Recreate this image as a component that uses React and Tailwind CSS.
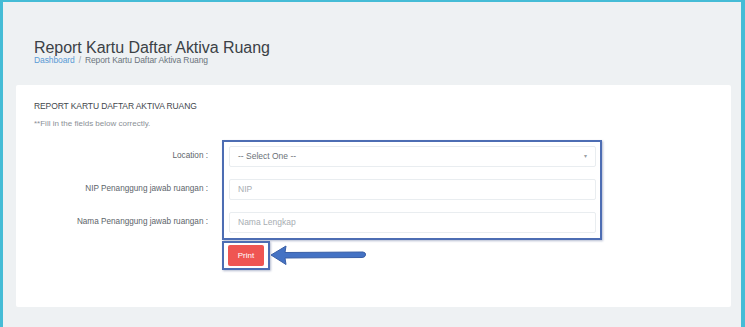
import React from "react";

const font = { fontFamily: '"Liberation Sans", Arial, sans-serif' };

export default function App() {
  const labels = ["Location :", "NIP Penanggung jawab ruangan :", "Nama Penanggung jawab ruangan :"];
  return (
    <div style={font} className="w-[745px] h-[327px] bg-[#eef1f3] border-t-2 border-l-[3px] border-r-[4px] border-[#45bcd6] overflow-hidden">
      <div className="pl-[31px] pt-[36px]">
        <h1 className="text-[16px] leading-[20px] text-[#3b4146] font-normal tracking-[-0.05px]">Report Kartu Daftar Aktiva Ruang</h1>
        <div className="text-[8.5px] leading-[11px] mt-[-3px] text-[#6c757d] tracking-[-0.1px]">
          <span className="text-[#5b9bd5]">Dashboard</span>
          <span className="mx-[4px] text-[#9aa2a8]">/</span>
          <span>Report Kartu Daftar Aktiva Ruang</span>
        </div>
      </div>
      <div className="ml-[13px] mt-[19px] w-[715px] h-[222px] bg-white rounded-[2px] pl-[18px] pt-[16px]">
        <div className="text-[8.5px] leading-[11px] text-[#3f464c] tracking-[-0.1px]">REPORT KARTU DAFTAR AKTIVA RUANG</div>
        <div className="text-[8px] leading-[10px] text-[#8a9096] mt-[7px]">**Fill in the fields below correctly.</div>
        <div className="flex mt-[11px]">
          <div className="w-[174px] flex flex-col items-end pt-[6px] gap-[12px] text-[8.2px] text-[#5d646a]">
            {labels.map((l) => (
              <div key={l} className="h-[21px] flex items-center">{l}</div>
            ))}
          </div>
          <div className="ml-[14px] w-[380px] h-[100px] border-2 border-[#4d6db3] shadow-[1px_1px_2px_rgba(40,60,120,0.35)] pl-[5px] pr-[4px] pt-[4px] flex flex-col gap-[12px]">
            <div className="h-[21px] border border-[#e9edf0] rounded-[2px] flex items-center justify-between px-[8px] text-[8.5px] text-[#6b7278]">
              <span>-- Select One --</span>
              <span className="text-[6px] text-[#9aa0a5]">▾</span>
            </div>
            <div className="h-[21px] border border-[#e9edf0] rounded-[2px] flex items-center px-[8px] text-[8.5px] text-[#a7adb2]">NIP</div>
            <div className="h-[21px] border border-[#e9edf0] rounded-[2px] flex items-center px-[8px] text-[8.5px] text-[#a7adb2]">Nama Lengkap</div>
          </div>
        </div>
        <div className="flex items-center ml-[188px] mt-[1px]">
          <div className="w-[48px] h-[29px] border-2 border-[#4d6db3] shadow-[1px_1px_2px_rgba(40,60,120,0.35)] pl-[4px] pt-[2px]">
            <div className="w-[36px] h-[21px] bg-[#ef5552] rounded-[2px] flex items-center justify-center text-white text-[8px]">Print</div>
          </div>
          <svg width="100" height="24" viewBox="0 0 100 24" className="-ml-[1px]">
            <path d="M2 11 L17 2 L16 8.5 L94 8 Q97 8.5 96.5 11 Q96 13.5 93 13.5 L16 14 L17 20.5 Z" fill="#4472c4" stroke="#3a5fa6" strokeWidth="1" strokeLinejoin="round" />
          </svg>
        </div>
      </div>
    </div>
  );
}
